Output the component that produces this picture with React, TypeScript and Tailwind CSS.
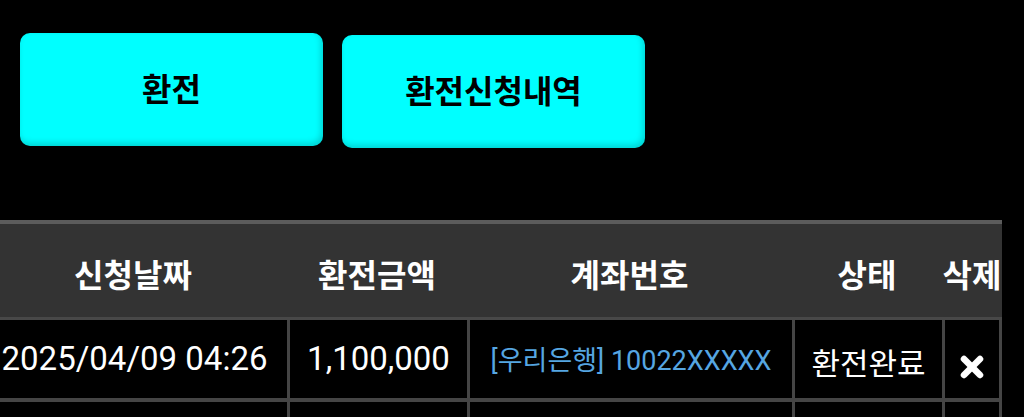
import React from "react";

const XIcon = () => (
  <svg width="26" height="26" viewBox="0 0 26 26">
    <line x1="5" y1="5" x2="21" y2="21" stroke="white" strokeWidth="6.5" strokeLinecap="round" />
    <line x1="21" y1="5" x2="5" y2="21" stroke="white" strokeWidth="6.5" strokeLinecap="round" />
  </svg>
);

export default function App() {
  return (
    <div className="h-[417px] w-[1024px] overflow-hidden bg-black font-[family-name:Roboto,'Noto_Sans_CJK_KR',sans-serif]">
      <div className="flex items-start gap-[19px] pl-[20px] pt-[33px]">
        <button className="flex h-[113px] w-[303px] items-center justify-center rounded-[10px] bg-[#00ffff] text-[32px] font-bold text-black shadow-[inset_-2px_-3px_6px_rgba(0,0,0,0.18)]">
          환전
        </button>
        <button className="mt-[2px] flex h-[113px] w-[303px] items-center justify-center rounded-[10px] bg-[#00ffff] text-[32px] font-bold text-black shadow-[inset_-2px_-3px_6px_rgba(0,0,0,0.18)]">
          환전신청내역
        </button>
      </div>

      <div className="mt-[72px] w-[1002px] overflow-hidden">
        <div className="ml-[-21px] w-[1023px]">
          <div className="flex h-[100px] border-t-4 border-b-[3px] border-t-[#5c5c5c] border-b-[#484848] bg-[#333333] text-[32px] font-bold text-white">
            <div className="flex w-[308px] items-center justify-center pt-[11px]">신청날짜</div>
            <div className="flex w-[180px] items-center justify-center pt-[11px]">환전금액</div>
            <div className="flex w-[325px] items-center justify-center pt-[11px]">계좌번호</div>
            <div className="flex w-[150px] items-center justify-center pt-[11px]">상태</div>
            <div className="flex w-[60px] items-center justify-center pt-[11px]">삭제</div>
          </div>

          <div className="flex h-[82px] text-white">
            <div className="flex w-[308px] items-center justify-center border-b-4 border-l-[3px] border-[#454545] text-[33px]">
              2025/04/09 04:26
            </div>
            <div className="flex w-[180px] items-center justify-center border-b-4 border-l-[3px] border-[#454545] text-[33px]">
              1,100,000
            </div>
            <div className="flex w-[325px] items-center justify-center border-b-4 border-l-[3px] border-[#454545] pt-[4px] text-[27px] text-[#56a6e2]">
              [우리은행] 10022XXXXX
            </div>
            <div className="flex w-[150px] items-center justify-center border-b-4 border-l-[3px] border-[#454545] pt-[12px] text-[31px]">
              환전완료
            </div>
            <div className="flex w-[60px] items-center justify-center border-b-4 border-l-[3px] border-r-[3px] border-[#454545] pt-[15px]">
              <XIcon />
            </div>
          </div>

          <div className="flex h-[82px] text-white">
            <div className="w-[308px] border-l-[3px] border-[#454545]" />
            <div className="w-[180px] border-l-[3px] border-[#454545]" />
            <div className="w-[325px] border-l-[3px] border-[#454545]" />
            <div className="w-[150px] border-l-[3px] border-[#454545]" />
            <div className="w-[60px] border-l-[3px] border-r-[3px] border-[#454545]" />
          </div>
        </div>
      </div>
    </div>
  );
}
